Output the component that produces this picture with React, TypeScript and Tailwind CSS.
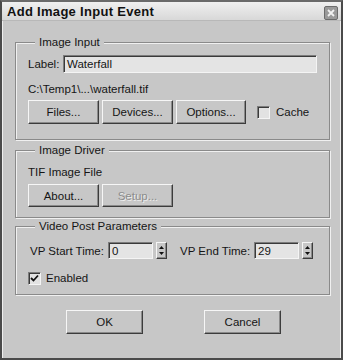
import React from "react";

const raised =
  "border border-t-[#f6f6f6] border-l-[#f6f6f6] border-r-[#3c3c3c] border-b-[#3c3c3c] shadow-[inset_-1px_-1px_0_#8a8a8a]";
const sunken =
  "border border-t-[#7c7c7c] border-l-[#7c7c7c] border-r-[#f4f4f4] border-b-[#f4f4f4] shadow-[inset_1px_1px_0_#3a3a3a]";

const Button = ({ label, w, h, disabled }: { label: string; w: string; h: string; disabled?: boolean }) => (
  <div className={`${raised} ${w} ${h} flex items-center justify-center bg-[#c7c7c7]`}>
    <span className={disabled ? "text-[#8c8c8c] [text-shadow:1px_1px_0_#eeeeee]" : "text-[#151515]"}>{label}</span>
  </div>
);

const Check = ({ checked }: { checked?: boolean }) => (
  <div className={`${sunken} w-[13px] h-[13px] bg-[#e2e2e2] flex items-center justify-center`}>
    {checked && (
      <svg width="9" height="9" viewBox="0 0 9 9">
        <path d="M1 4 L3.5 6.5 L8 1.5" stroke="#111" strokeWidth="1.8" fill="none" />
      </svg>
    )}
  </div>
);

const Spinner = () => (
  <div className={`${raised} w-[11px] h-[17px] flex flex-col items-center justify-center gap-[3px] bg-[#c7c7c7]`}>
    <svg width="5" height="3" viewBox="0 0 5 3">
      <path d="M2.5 0 L5 3 L0 3 Z" fill="#111" />
    </svg>
    <svg width="5" height="3" viewBox="0 0 5 3">
      <path d="M0 0 L5 0 L2.5 3 Z" fill="#111" />
    </svg>
  </div>
);

const Group = ({ title, className, children }: { title: string; className: string; children: React.ReactNode }) => (
  <fieldset
    className={`border border-[#8a8a8a] shadow-[1px_1px_0_#f0f0f0,inset_1px_1px_0_#f0f0f0] mx-0 px-[12px] ${className}`}
  >
    <legend className="ml-[7px] px-[4px] leading-[14px] bg-[#c7c7c7] text-[#151515]">{title}</legend>
    {children}
  </fieldset>
);

export default function App() {
  return (
    <div
      className="w-[343px] h-[360px] bg-[#c7c7c7] border-2 border-[#4a4a4a] border-t-[#6a6a6a] flex flex-col text-[11.5px] leading-[14px] text-[#151515] overflow-hidden"
      style={{ fontFamily: '"Liberation Sans", Arial, sans-serif' }}
    >
      <div className="h-[19px] shrink-0 flex items-center justify-between pl-[5px] pr-[3px] bg-gradient-to-b from-[#f0f0f0] to-[#d8d8d8] border-b border-[#b8b8b8]">
        <span className="text-[13px] leading-[16px] font-bold tracking-[0.3px] text-[#111] mt-[1px]">Add Image Input Event</span>
        <div className="w-[14px] h-[14px] rounded-[2px] bg-[#9a9a9a] border border-[#6c6c6c] flex items-center justify-center mt-[3px]">
          <svg width="8" height="8" viewBox="0 0 8 8">
            <path d="M1 1 L7 7 M7 1 L1 7" stroke="#f2f2f2" strokeWidth="1.8" />
          </svg>
        </div>
      </div>

      <div className="flex-1 border-l border-r border-[#eeeeee] pl-[12px] pr-[10px] flex flex-col">
        <Group title="Image Input" className="mt-[14px] pt-[6px] pb-[15px]">
          <div className="flex items-center">
            <span className="w-[35px]">Label:</span>
            <div className={`${sunken} flex-1 h-[18px] bg-[#e4e4e4] flex items-center pl-[3px]`}>Waterfall</div>
          </div>
          <div className="mt-[9px]">C:\Temp1\...\waterfall.tif</div>
          <div className="flex items-center mt-[4px]">
            <Button label="Files..." w="w-[71px]" h="h-[24px]" />
            <div className="w-[3px]" />
            <Button label="Devices..." w="w-[71px]" h="h-[24px]" />
            <div className="w-[3px]" />
            <Button label="Options..." w="w-[70px]" h="h-[24px]" />
            <div className="w-[11px]" />
            <Check />
            <span className="ml-[6px]">Cache</span>
          </div>
        </Group>

        <Group title="Image Driver" className="mt-[3px] pt-[8px] pb-[10px]">
          <div>TIF Image File</div>
          <div className="flex items-center mt-[5px]">
            <Button label="About..." w="w-[71px]" h="h-[23px]" />
            <div className="w-[3px]" />
            <Button label="Setup..." w="w-[71px]" h="h-[23px]" disabled />
          </div>
        </Group>

        <Group title="Video Post Parameters" className="mt-[1px] pt-[9px] pb-[9px]">
          <div className="flex items-center pl-[2px]">
            <span className="w-[78px]">VP Start Time:</span>
            <div className={`${sunken} w-[45px] h-[17px] bg-[#e4e4e4] flex items-center pl-[3px]`}>0</div>
            <div className="w-[3px]" />
            <Spinner />
            <span className="ml-[13px] w-[74px]">VP End Time:</span>
            <div className={`${sunken} w-[45px] h-[17px] bg-[#e4e4e4] flex items-center pl-[3px]`}>29</div>
            <div className="w-[3px]" />
            <Spinner />
          </div>
          <div className="flex items-center mt-[12px]">
            <Check checked />
            <span className="ml-[5px]">Enabled</span>
          </div>
        </Group>

        <div className="flex mt-[15px] pl-[51px]">
          <Button label="OK" w="w-[77px]" h="h-[24px]" />
          <div className="w-[61px]" />
          <Button label="Cancel" w="w-[77px]" h="h-[24px]" />
        </div>
      </div>
    </div>
  );
}
